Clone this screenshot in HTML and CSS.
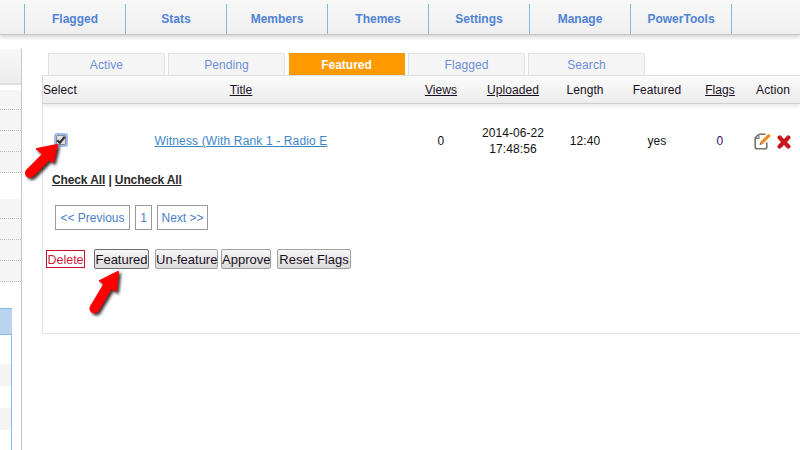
FILE: index.html
```html
<!DOCTYPE html>
<html lang="en">
<head>
<meta charset="utf-8">
<title>Featured</title>
<link rel="stylesheet" href="styles.css">
</head>
<body>
<nav class="topbar">
  <a class="nav-item">Flagged</a><a class="nav-item">Stats</a><a class="nav-item">Members</a><a class="nav-item">Themes</a><a class="nav-item">Settings</a><a class="nav-item">Manage</a><a class="nav-item">PowerTools</a>
</nav>
<div class="page">
  <aside class="sidebar">
    <div class="side-head"></div>
    <div class="side-group side-group-top">
      <div class="side-first"></div><div class="side-row"></div><div class="side-row"></div><div class="side-row"></div>
    </div>
    <div class="side-gap"></div>
    <div class="side-group">
      <div class="side-first"></div><div class="side-row"></div><div class="side-row"></div><div class="side-row"></div>
    </div>
    <div class="side-blue">
      <div class="blue-head"></div>
      <div class="blue-white"></div>
      <div class="blue-grey"></div>
      <div class="blue-white2"></div>
      <div class="blue-grey"></div>
    </div>
  </aside>
  <main class="content">
    <div class="tabs">
      <a class="tab">Active</a><a class="tab">Pending</a><a class="tab tab-on">Featured</a><a class="tab">Flagged</a><a class="tab">Search</a>
    </div>
    <section class="panel">
      <div class="grid head">
        <span class="c-select">Select</span><u>Title</u><u>Views</u><u>Uploaded</u><span>Length</span><span>Featured</span><u>Flags</u><span>Action</span>
      </div>
      <div class="grid row">
        <span class="check"><svg width="10" height="10" viewBox="0 0 10 10"><path d="M1.2 5.2 L3.8 7.8 L8.8 1.8" fill="none" stroke="#333" stroke-width="2.2"/></svg></span>
        <a class="title-link">Witness (With Rank 1 - Radio E</a>
        <span>0</span>
        <span>2014-06-22<br>17:48:56</span>
        <span>12:40</span>
        <span>yes</span>
        <span class="flag-count">0</span>
        <span class="actions">
          <svg width="18" height="17" viewBox="0 0 18 17"><path d="M5 1.2 H11.5 M4.6 1.4 L1.2 4.8 V14 Q1.2 15.8 3 15.8 H11 Q12.8 15.8 12.8 14 V9.5" fill="none" stroke="#77736c" stroke-width="1.6"/><path d="M1.5 5.4 H5 V1.8" fill="none" stroke="#77736c" stroke-width="1.1"/><path d="M7.2 10.2 L15.6 1.8" stroke="#ef8a1c" stroke-width="3.2" fill="none"/><path d="M5.6 12 L6.2 9.4 L8.2 11.3 Z" fill="#666"/></svg>
          <svg class="x-icon" width="14" height="14" viewBox="0 0 14 14"><path d="M2.6 2.6 L11.4 11.4 M11.4 2.6 L2.6 11.4" stroke="#c8181c" stroke-width="4.2" stroke-linecap="round"/></svg>
        </span>
      </div>
      <div class="checks"><u>Check All</u> | <u>Uncheck All</u></div>
      <div class="pager">
        <a class="page-btn pg-prev">&lt;&lt; Previous</a><a class="page-btn pg-one">1</a><a class="page-btn pg-next">Next &gt;&gt;</a>
      </div>
      <div class="buttons">
        <a class="delete">Delete</a>
        <button class="btn btn-focus" type="button">Featured</button>
        <button class="btn" type="button">Un-feature</button>
        <button class="btn btn-tight" type="button">Approve</button>
        <button class="btn btn-wide" type="button">Reset Flags</button>
      </div>
    </section>
  </main>
</div>
<svg class="arrow arrow-one" width="50" height="50" viewBox="0 0 50 50"><path d="M36 11 L16 15 L32 28 Z" fill="#f00" stroke="#f00" stroke-width="2" stroke-linejoin="round"/><path d="M9 39 L27 21" stroke="#f00" stroke-width="10" stroke-linecap="round"/></svg>
<svg class="arrow arrow-two" width="50" height="60" viewBox="0 0 50 60"><path d="M33 8 L15 17 L31 27 Z" fill="#f00" stroke="#f00" stroke-width="2" stroke-linejoin="round"/><path d="M9.5 44.5 L24 20" stroke="#f00" stroke-width="10" stroke-linecap="round"/></svg>
</body>
</html>
```
FILE: styles.css
```css
html, body { margin: 0; padding: 0; width: 800px; height: 450px; overflow: hidden; background: #fff; }
body { font-family: "Liberation Sans", Arial, sans-serif; font-size: 12px; color: #111; position: relative; }

.topbar { height: 35px; padding-left: 24px; display: flex; align-items: flex-start; box-sizing: border-box; padding-top: 4px;
  background: linear-gradient(#f8f8f8, #efefef); border-bottom: 1px solid #c6c6c6; box-shadow: 0 2px 4px rgba(0,0,0,.18); }
.nav-item { width: 100px; height: 30px; line-height: 31px; text-align: center; font-weight: bold; color: #4f83d6;
  border-left: 1px solid #7fb9e6; }
.nav-item:last-child { border-right: 1px solid #7fb9e6; }

.page { display: flex; height: 415px; }

.sidebar { width: 21px; margin-top: 14px; border-right: 1px solid #c8c8c8; flex: none; height: 401px; }
.side-head { height: 34px; background: linear-gradient(#f8f8f8, #ececec); border-bottom: 2px solid #ddd; }
.side-group { background: #f5f5f5; }
.side-group-top { margin-top: 5px; }
.side-first { height: 20px; border-bottom: 1px dotted #bbb; box-sizing: border-box; }
.side-row { height: 21px; border-bottom: 1px dotted #bbb; box-sizing: border-box; }
.side-gap { height: 26px; }
.side-blue { margin-top: 26px; width: 11px; border-right: 1px solid #8db9ea; height: 142px; }
.blue-head { height: 25px; background: #b9d4f1; border-top: 1px solid #8db9ea; border-bottom: 1px solid #8db9ea; margin-right: -1px; }
.blue-white { height: 29px; }
.blue-grey { height: 22px; background: #f4f4f4; }
.blue-white2 { height: 22px; }

.content { flex: 1; min-width: 0; padding: 18px 0 0 20px; }
.tabs { display: flex; gap: 3px; padding-left: 6px; height: 22px; }
.tab { width: 117px; height: 23px; box-sizing: border-box; line-height: 23px; text-align: center; color: #6d8fd8;
  background: #f5f5f5; border: 1px solid #e2e2e2; border-bottom: 0; letter-spacing: .1px; }
.tab-on { background: #ff9900; border-color: #ff9900; border-left-color: #fff; color: #fff; font-weight: bold; letter-spacing: 0; }

.panel { position: relative; height: 259px; border: 1px solid #e2e2e2; border-right: 0; box-sizing: border-box; background: #fff; }
.grid { display: grid; grid-template-columns: 37px 322px 78px 66px 78px 66px 60px 46px; text-align: center; align-items: center; letter-spacing: .08px; }
.head { height: 28px; background: linear-gradient(#fbfbfb, #ececec); border-bottom: 1px solid #cfcfcf; box-shadow: 0 2px 4px rgba(0,0,0,.1); color: #1a1025; box-sizing: border-box; }
.c-select { text-align: left; }
.row { height: 69px; box-sizing: border-box; padding-top: 5px; line-height: 16px; }
.check { width: 8px; height: 8px; align-self: start; margin: 26px 0 0 13px; background: #ddd; border: 1px solid #888; outline: 2px solid #9dbcf0; display: flex; align-items: center; justify-content: center; border-radius: 1px; }
.check svg { flex: none; }
.title-link { color: #3c86c6; text-decoration: underline; letter-spacing: .14px; }
.flag-count { color: #3a0f70; }
.actions { display: flex; align-items: center; justify-content: flex-start; gap: 5px; margin-left: 4px; }
.x-icon { margin-top: 2px; }

.checks { margin-left: 9px; font-weight: bold; color: #2a2a2a; height: 14px; line-height: 14px; letter-spacing: -.12px; }
.pager { display: flex; gap: 5px; margin: 18px 0 0 12px; }
.page-btn { height: 25px; line-height: 24px; box-sizing: border-box; border: 1px solid #9a9a9a; text-align: center; color: #4b80c8; }
.pg-prev { width: 75px; }
.pg-one { width: 17px; }
.pg-next { width: 51px; }

.buttons { display: flex; align-items: center; margin: 19px 0 0 3px; }
.delete { height: 18px; line-height: 18px; box-sizing: border-box; width: 39px; text-align: center; font-size: 12.5px; border: 1px solid #c8102e; color: #cf1d3c; margin-right: 9px; }
.btn { font: 13px "Liberation Sans", Arial, sans-serif; white-space: nowrap; color: #1a1025; height: 20px; padding: 0; box-sizing: border-box; background: linear-gradient(#f6f6f6, #dcdcdc); border: 1px solid #a0a0a0; border-radius: 2px; width: 63px; margin-right: 3px; }
.btn-focus { width: 55px; margin-right: 6px; border-color: #6c6c6c; }
.btn-tight { width: 50px; margin-right: 6px; }
.btn-wide { width: 74px; }

.arrow { position: absolute; filter: drop-shadow(2px 2px 1.5px rgba(0,0,0,.8)); }
.arrow-one { left: 21px; top: 134px; }
.arrow-two { left: 85px; top: 264px; }
```
